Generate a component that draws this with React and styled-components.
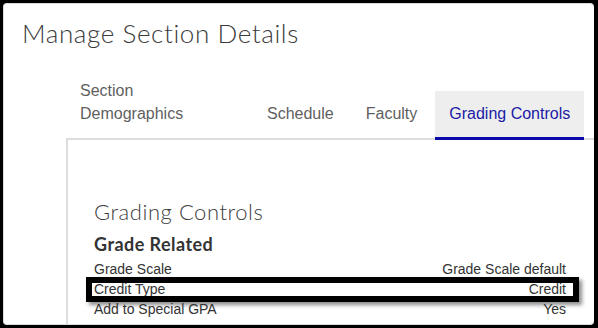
import { createGlobalStyle, styled } from "styled-components";

const GlobalStyle = createGlobalStyle`
  html, body {
    margin: 0;
    padding: 0;
    background: #ffffff;
  }
  * {
    box-sizing: border-box;
  }
`;

const Frame = styled.div`
  width: 598px;
  height: 328px;
  border-style: solid;
  border-color: #000000;
  border-width: 3px 4px 3px 3px;
  overflow: hidden;
  background: #000000;
`;

const Page = styled.div`
  height: 100%;
  background: #ffffff;
  border: 1px solid #dcdcdc;
  border-radius: 4px;
  border-right: none;
  padding: 13px 0 0 18px;
`;

const Title = styled.h1`
  margin: 0;
  font-family: "Lato", "Open Sans", sans-serif;
  font-weight: 300;
  font-size: 26px;
  line-height: 32px;
  letter-spacing: 0.6px;
  color: #3a3a3a;
`;

const Container = styled.div`
  margin: 30px 0 0 44px;
`;

const TabBar = styled.div`
  display: flex;
  align-items: flex-end;
  gap: 4px;
  border-bottom: 2px solid #dddddd;
`;

const Tab = styled.div`
  padding: 11px 14px 12px;
  margin-bottom: -2px;
  font-family: "Liberation Sans", Arial, sans-serif;
  font-size: 16px;
  line-height: 23px;
  color: ${(p) => (p.$active ? "#1a1aa6" : "#5f5f5f")};
  background: ${(p) => (p.$active ? "#eeeeee" : "transparent")};
  border-bottom: 3px solid ${(p) => (p.$active ? "#0a0aaa" : "transparent")};
  width: ${(p) => p.$width || "auto"};
  padding-top: ${(p) => (p.$wrap ? "0" : "11px")};
`;

const TabLabel = styled.span`
  display: block;
  max-width: ${(p) => (p.$wrap ? "120px" : "none")};
`;

const Panel = styled.div`
  border-left: 2px solid #dddddd;
  padding: 58px 28px 0 26px;
  min-height: 200px;
`;

const SectionTitle = styled.h2`
  margin: 0;
  font-family: "Lato", "Open Sans", sans-serif;
  font-weight: 300;
  font-size: 22px;
  line-height: 28px;
  letter-spacing: 0.55px;
  color: #404040;
`;

const GroupTitle = styled.h3`
  margin: 7px 0 4px;
  font-family: "Lato", "Open Sans", sans-serif;
  font-weight: 700;
  font-size: 18px;
  line-height: 22px;
  letter-spacing: 0.45px;
  color: #333333;
`;

const Row = styled.div`
  position: relative;
  display: flex;
  justify-content: space-between;
  font-family: "Liberation Sans", Arial, sans-serif;
  font-size: 14px;
  line-height: 20px;
  color: #333333;
`;

const Highlight = styled.div`
  position: absolute;
  left: -8px;
  right: -13px;
  top: -2px;
  bottom: -3px;
  border: 6px solid #000000;
  box-shadow: 3px 3px 4px rgba(0, 0, 0, 0.45);
  pointer-events: none;
`;

const tabs = [
  { label: "Section Demographics", wrap: true, width: "183px" },
  { label: "Schedule" },
  { label: "Faculty" },
  { label: "Grading Controls", active: true },
];

const rows = [
  { label: "Grade Scale", value: "Grade Scale default" },
  { label: "Credit Type", value: "Credit", marked: true },
  { label: "Add to Special GPA", value: "Yes" },
];

const App = () => {
  return (
    <>
      <GlobalStyle />
      <Frame>
        <Page>
          <Title>Manage Section Details</Title>
          <Container>
            <TabBar>
              {tabs.map((t) => (
                <Tab key={t.label} $active={t.active} $wrap={t.wrap} $width={t.width}>
                  <TabLabel $wrap={t.wrap}>{t.label}</TabLabel>
                </Tab>
              ))}
            </TabBar>
            <Panel>
              <SectionTitle>Grading Controls</SectionTitle>
              <GroupTitle>Grade Related</GroupTitle>
              {rows.map((r) => (
                <Row key={r.label}>
                  <span>{r.label}</span>
                  <span>{r.value}</span>
                  {r.marked && <Highlight />}
                </Row>
              ))}
            </Panel>
          </Container>
        </Page>
      </Frame>
    </>
  );
};

export default App;
